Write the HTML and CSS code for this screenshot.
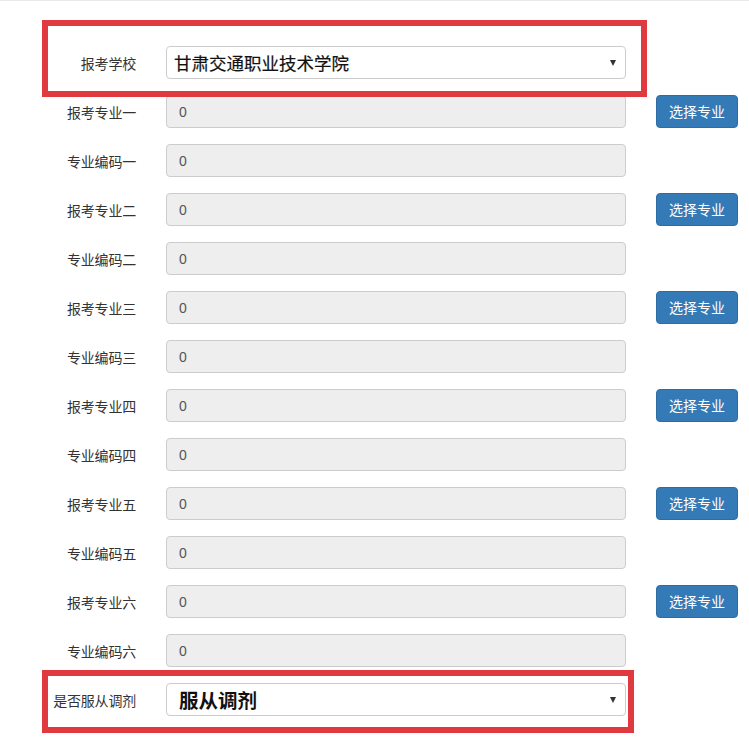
FILE: index.html
```html
<!DOCTYPE html>
<html lang="zh-CN">
<head>
<meta charset="utf-8">
<title>报考志愿</title>
<link rel="stylesheet" href="styles.css">
</head>
<body>
<div class="page">
  <form class="form">
    <div class="row">
      <label class="lbl">报考学校</label>
      <div class="select school"><span>甘肃交通职业技术学院</span><i class="caret"></i></div>
    </div>
    <div class="row">
      <label class="lbl">报考专业一</label>
      <div class="input">0</div>
      <button type="button" class="btn">选择专业</button>
    </div>
    <div class="row">
      <label class="lbl">专业编码一</label>
      <div class="input">0</div>
    </div>
    <div class="row">
      <label class="lbl">报考专业二</label>
      <div class="input">0</div>
      <button type="button" class="btn">选择专业</button>
    </div>
    <div class="row">
      <label class="lbl">专业编码二</label>
      <div class="input">0</div>
    </div>
    <div class="row">
      <label class="lbl">报考专业三</label>
      <div class="input">0</div>
      <button type="button" class="btn">选择专业</button>
    </div>
    <div class="row">
      <label class="lbl">专业编码三</label>
      <div class="input">0</div>
    </div>
    <div class="row">
      <label class="lbl">报考专业四</label>
      <div class="input">0</div>
      <button type="button" class="btn">选择专业</button>
    </div>
    <div class="row">
      <label class="lbl">专业编码四</label>
      <div class="input">0</div>
    </div>
    <div class="row">
      <label class="lbl">报考专业五</label>
      <div class="input">0</div>
      <button type="button" class="btn">选择专业</button>
    </div>
    <div class="row">
      <label class="lbl">专业编码五</label>
      <div class="input">0</div>
    </div>
    <div class="row">
      <label class="lbl">报考专业六</label>
      <div class="input">0</div>
      <button type="button" class="btn">选择专业</button>
    </div>
    <div class="row">
      <label class="lbl">专业编码六</label>
      <div class="input">0</div>
    </div>
    <div class="row">
      <label class="lbl">是否服从调剂</label>
      <div class="select adjust"><span>服从调剂</span><i class="caret"></i></div>
    </div>
  </form>
  <div class="mark mark-top"></div>
  <div class="mark mark-bottom"></div>
</div>
</body>
</html>
```

FILE: styles.css
```css
html, body {
  margin: 0;
  padding: 0;
  background: #fff;
}
body {
  font-family: "Noto Sans CJK SC", "Noto Sans", sans-serif;
  color: #333;
  border-top: 1px solid #e8e8e8;
}
.page {
  position: relative;
  width: 749px;
  height: 741px;
  overflow: hidden;
}
.form {
  display: flex;
  flex-direction: column;
  gap: 16px;
  padding-top: 45px;
}
.row {
  display: grid;
  grid-template-columns: 136px 460px 82px;
  column-gap: 30px;
  height: 33px;
  align-items: center;
}
.lbl {
  text-align: right;
  font-size: 14px;
  color: #333;
  white-space: nowrap;
  letter-spacing: -0.2px;
}
.input, .select {
  box-sizing: border-box;
  height: 33px;
  border: 1px solid #ccc;
  border-radius: 4px;
  display: flex;
  align-items: center;
}
.input {
  background: #eee;
  padding-left: 12px;
  font-size: 14px;
  color: #555;
  font-family: "Liberation Sans", "Noto Sans CJK SC", sans-serif;
}
.select {
  background: #fff;
  justify-content: space-between;
  padding: 0 9px 0 7px;
  color: #111;
}
.school span {
  font-size: 17.5px;
  font-weight: 400;
  -webkit-text-stroke: 0.2px #111;
}
.adjust span {
  font-size: 19.5px;
  font-weight: 700;
  padding-left: 5px;
}
.caret {
  width: 0;
  height: 0;
  border-left: 3px solid transparent;
  border-right: 3px solid transparent;
  border-top: 6px solid #333;
}
.btn {
  height: 33px;
  margin-top: -1px;
  border: 1px solid #2e6da4;
  border-radius: 4px;
  background: #337ab7;
  color: #fff;
  font-family: "Noto Sans CJK SC", sans-serif;
  font-size: 14px;
  padding: 0;
}
.mark {
  position: absolute;
  box-sizing: border-box;
  border: 6px solid #e0393f;
  pointer-events: none;
}
.mark-top {
  left: 42px;
  top: 19px;
  width: 605px;
  height: 77px;
}
.mark-bottom {
  left: 42px;
  top: 669px;
  width: 592px;
  height: 63px;
}
```
